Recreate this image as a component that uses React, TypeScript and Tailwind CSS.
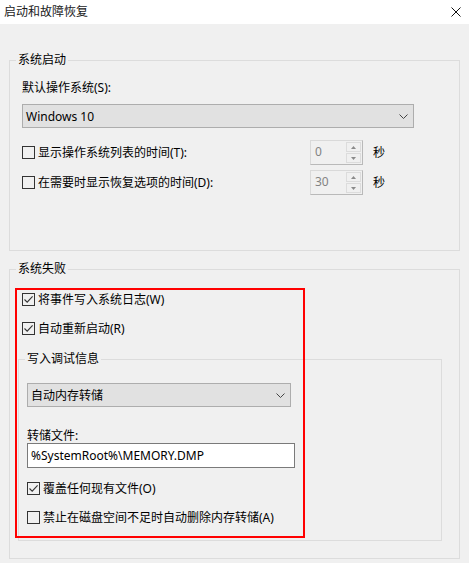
import type { ReactNode } from 'react';

const font = { fontFamily: '"Noto Sans", "Noto Sans CJK SC", sans-serif' };

function CheckBox({ checked, label }: { checked?: boolean; label: string }) {
  return (
    <div className="flex items-center h-[16px] gap-[3px]">
      <span className="w-[13px] h-[13px] border border-[#333333] bg-transparent flex items-center justify-center shrink-0">
        {checked && (
          <svg width="11" height="11" viewBox="0 0 11 11">
            <path d="M1.5 5.5 L4.2 8.2 L9.6 2.4" fill="none" stroke="#333333" strokeWidth="1.1" />
          </svg>
        )}
      </span>
      <span className="text-[12px] leading-[16px] pt-[1px] text-black whitespace-nowrap">{label}</span>
    </div>
  );
}

function Chevron() {
  return (
    <svg width="9" height="5" viewBox="0 0 9 5">
      <path d="M0.5 0.5 L4.5 4.5 L8.5 0.5" fill="none" stroke="#444444" strokeWidth="1" />
    </svg>
  );
}

function Combo({ value, width }: { value: string; width: string }) {
  return (
    <div
      className={`${width} h-[24px] border border-[#adadad] bg-[#e1e1e1] flex items-center justify-between pl-[3px] pr-[5px]`}
    >
      <span className="text-[12px] leading-[16px] pt-[1px] text-black">{value}</span>
      <Chevron />
    </div>
  );
}

function Spinner({ value }: { value: string }) {
  return (
    <div className="w-[53px] h-[25px] border border-[#d9d9d9] border-r-[#b9b9b9] border-b-[#b9b9b9] bg-[#f0f0f0] flex">
      <div className="flex-1 pl-[4px] text-[12px] leading-[22px] text-[#838383]">{value}</div>
      <div className="w-[17px] flex flex-col p-[1px] gap-[1px]">
        <div className="flex-1 border border-[#dcdcdc] flex items-center justify-center">
          <svg width="5" height="3" viewBox="0 0 5 3">
            <path d="M0 3 L2.5 0 L5 3 Z" fill="#8a8a8a" />
          </svg>
        </div>
        <div className="flex-1 border border-[#dcdcdc] flex items-center justify-center">
          <svg width="5" height="3" viewBox="0 0 5 3">
            <path d="M0 0 L2.5 3 L5 0 Z" fill="#8a8a8a" />
          </svg>
        </div>
      </div>
    </div>
  );
}

function Group({ title, className, children }: { title: string; className: string; children: ReactNode }) {
  return (
    <fieldset className={`border border-[#dcdcdc] ${className}`}>
      <legend className="ml-[6px] px-[2px] text-[12px] leading-[16px] text-black">{title}</legend>
      {children}
    </fieldset>
  );
}

function TimeRow({ label, value }: { label: string; value: string }) {
  return (
    <div className="flex items-center h-[25px]">
      <div className="w-[288px]">
        <CheckBox label={label} />
      </div>
      <Spinner value={value} />
      <span className="ml-[10px] text-[12px] leading-[16px] text-black">秒</span>
    </div>
  );
}

export default function App() {
  return (
    <div className="relative w-[469px] h-[563px] bg-[#f0f0f0] overflow-hidden text-black" style={font}>
      <div className="h-[24px] bg-white flex items-center justify-between pl-[4px] pr-[8px]">
        <span className="text-[12px] leading-[16px] text-[#1a1a1a]">启动和故障恢复</span>
        <svg width="10" height="10" viewBox="0 0 10 10">
          <path d="M0.5 0.5 L9.5 9.5 M9.5 0.5 L0.5 9.5" stroke="#111111" strokeWidth="1" />
        </svg>
      </div>

      <div className="px-[9px] w-[469px]">
        <Group title="系统启动" className="mt-[28px] w-[451px]">
          <div className="pl-[12px] pt-[12px] pb-[55px]">
            <div className="text-[12px] leading-[16px]">默认操作系统(S):</div>
            <div className="mt-[8px]">
              <Combo value="Windows 10" width="w-[392px]" />
            </div>
            <div className="mt-[12px] flex flex-col gap-[5px]">
              <TimeRow label="显示操作系统列表的时间(T):" value="0" />
              <TimeRow label="在需要时显示恢复选项的时间(D):" value="30" />
            </div>
          </div>
        </Group>

        <Group title="系统失败" className="mt-[10px] w-[451px]">
          <div className="pl-[8px] pt-[14px] pb-[17px]">
            <div className="ml-[4px] flex flex-col gap-[13px]">
              <CheckBox checked label="将事件写入系统日志(W)" />
              <CheckBox checked label="自动重新启动(R)" />
            </div>
            <Group title="写入调试信息" className="mt-[15px] w-[424px]">
              <div className="pl-[8px] pt-[16px] pb-[15px]">
                <Combo value="自动内存转储" width="w-[264px]" />
                <div className="mt-[21px] text-[12px] leading-[15px]">转储文件:</div>
                <div className="w-[268px] h-[25px] border border-[#7a7a7a] bg-white pl-[3px] text-[12px] leading-[23px]">
                  %SystemRoot%\MEMORY.DMP
                </div>
                <div className="mt-[12px] flex flex-col gap-[13px]">
                  <CheckBox checked label="覆盖任何现有文件(O)" />
                  <CheckBox label="禁止在磁盘空间不足时自动删除内存转储(A)" />
                </div>
              </div>
            </Group>
          </div>
        </Group>
      </div>

      <div className="absolute left-[15px] top-[288px] w-[290px] h-[250px] border-2 border-[#ff0000] pointer-events-none" />
    </div>
  );
}
